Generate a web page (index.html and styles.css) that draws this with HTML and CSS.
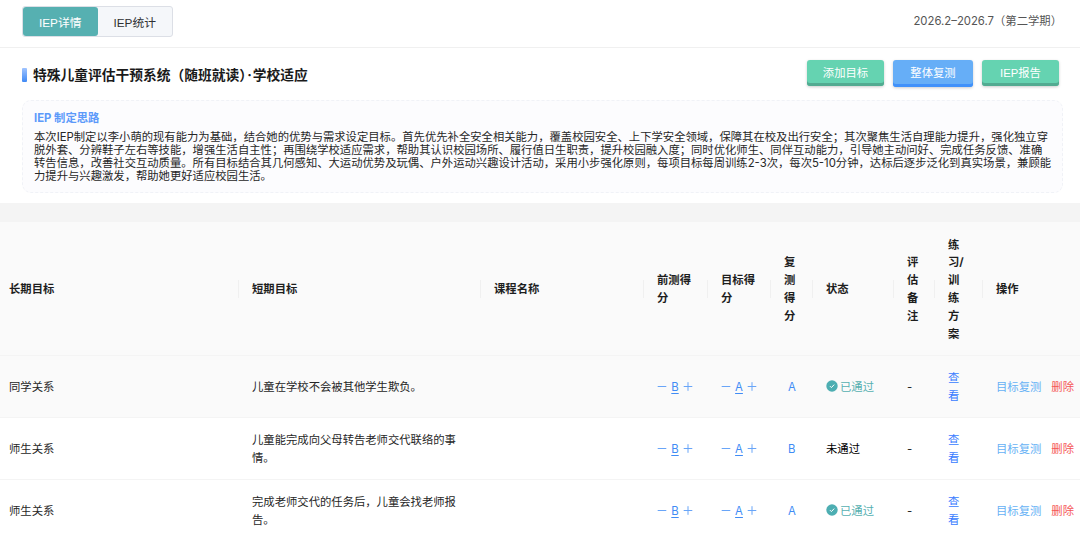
FILE: index.html
```html
<!DOCTYPE html>
<html lang="zh-CN">
<head>
    <meta charset="UTF-8">
    <meta name="viewport" content="width=device-width, initial-scale=1.0">
    <title>IEP详情</title>
    <link rel="stylesheet" href="styles.css">
</head>
<body>

<!-- Top bar -->
<header class="topbar">
    <div class="tabs">
        <button class="tab active">IEP详情</button>
        <button class="tab">IEP统计</button>
    </div>
    <div class="term">2026.2–2026.7（第二学期）</div>
</header>

<!-- Title and plan summary -->
<section class="plan">
    <div class="plan-head">
        <h2><span>特殊儿童评估干预系统（随班就读）<span class="dot">·</span>学校适应</span></h2>
        <div class="actions">
            <button class="btn green">添加目标</button>
            <button class="btn blue">整体复测</button>
            <button class="btn green">IEP报告</button>
        </div>
    </div>
    <div class="summary">
        <h3>IEP 制定思路</h3>
        <p>本次IEP制定以李小萌的现有能力为基础，结合她的优势与需求设定目标。首先优先补全安全相关能力，覆盖校园安全、上下学安全领域，保障其在校及出行安全；其次聚焦生活自理能力提升，强化独立穿脱外套、分辨鞋子左右等技能，增强生活自主性；再围绕学校适应需求，帮助其认识校园场所、履行值日生职责，提升校园融入度；同时优化师生、同伴互动能力，引导她主动问好、完成任务反馈、准确转告信息，改善社交互动质量。所有目标结合其几何感知、大运动优势及玩偶、户外运动兴趣设计活动，采用小步强化原则，每项目标每周训练2-3次，每次5-10分钟，达标后逐步泛化到真实场景，兼顾能力提升与兴趣激发，帮助她更好适应校园生活。</p>
    </div>
</section>

<!-- Goals table -->
<table class="goals">
    <colgroup>
        <col class="c-long">
        <col class="c-short">
        <col class="c-course">
        <col class="c-pre">
        <col class="c-target">
        <col class="c-retest">
        <col class="c-status">
        <col class="c-note">
        <col class="c-train">
        <col class="c-ops">
    </colgroup>
    <thead>
        <tr>
            <th>长期目标</th>
            <th>短期目标</th>
            <th>课程名称</th>
            <th>前测得分</th>
            <th>目标得分</th>
            <th>复测得分</th>
            <th>状态</th>
            <th>评估备注</th>
            <th>练习/训练方案</th>
            <th>操作</th>
        </tr>
    </thead>
    <tbody>
        <tr class="hover">
            <td>同学关系</td>
            <td>儿童在学校不会被其他学生欺负。</td>
            <td></td>
            <td><div class="score"><svg class="icon" viewBox="0 0 10 10"><path d="M.7 4.5H9.3"/></svg><u>B</u><svg class="icon" viewBox="0 0 10 10"><path d="M.7 4.5H9.3M5 .2V8.8"/></svg></div></td>
            <td><div class="score"><svg class="icon" viewBox="0 0 10 10"><path d="M.7 4.5H9.3"/></svg><u>A</u><svg class="icon" viewBox="0 0 10 10"><path d="M.7 4.5H9.3M5 .2V8.8"/></svg></div></td>
            <td class="retest">A</td>
            <td><div class="passed"><svg class="check" viewBox="0 0 12 12"><circle cx="6" cy="6" r="5.7"/><path d="M3.9 6.1L5.4 7.6L8.2 4.6"/></svg>已通过</div></td>
            <td>-</td>
            <td><a class="view">查看</a></td>
            <td><div class="ops"><a class="again">目标复测</a><a class="remove">删除</a></div></td>
        </tr>
        <tr>
            <td>师生关系</td>
            <td>儿童能完成向父母转告老师交代联络的事情。</td>
            <td></td>
            <td><div class="score"><svg class="icon" viewBox="0 0 10 10"><path d="M.7 4.5H9.3"/></svg><u>B</u><svg class="icon" viewBox="0 0 10 10"><path d="M.7 4.5H9.3M5 .2V8.8"/></svg></div></td>
            <td><div class="score"><svg class="icon" viewBox="0 0 10 10"><path d="M.7 4.5H9.3"/></svg><u>A</u><svg class="icon" viewBox="0 0 10 10"><path d="M.7 4.5H9.3M5 .2V8.8"/></svg></div></td>
            <td class="retest">B</td>
            <td class="failed">未通过</td>
            <td>-</td>
            <td><a class="view">查看</a></td>
            <td><div class="ops"><a class="again">目标复测</a><a class="remove">删除</a></div></td>
        </tr>
        <tr>
            <td>师生关系</td>
            <td>完成老师交代的任务后，儿童会找老师报告。</td>
            <td></td>
            <td><div class="score"><svg class="icon" viewBox="0 0 10 10"><path d="M.7 4.5H9.3"/></svg><u>B</u><svg class="icon" viewBox="0 0 10 10"><path d="M.7 4.5H9.3M5 .2V8.8"/></svg></div></td>
            <td><div class="score"><svg class="icon" viewBox="0 0 10 10"><path d="M.7 4.5H9.3"/></svg><u>A</u><svg class="icon" viewBox="0 0 10 10"><path d="M.7 4.5H9.3M5 .2V8.8"/></svg></div></td>
            <td class="retest">A</td>
            <td><div class="passed"><svg class="check" viewBox="0 0 12 12"><circle cx="6" cy="6" r="5.7"/><path d="M3.9 6.1L5.4 7.6L8.2 4.6"/></svg>已通过</div></td>
            <td>-</td>
            <td><a class="view">查看</a></td>
            <td><div class="ops"><a class="again">目标复测</a><a class="remove">删除</a></div></td>
        </tr>
    </tbody>
</table>

</body>
</html>
```
FILE: styles.css
```css
/* General styling */
* {
    box-sizing: border-box;
}

body {
    font-family: Inter, "Noto Sans CJK SC", sans-serif;
    font-size: 11.33px;
    line-height: 17.8px;
    color: rgb(38, 38, 38);
    background-color: white;
    margin: 0;
    height: 540px;
    overflow: hidden;
}

button {
    font-family: "Liberation Sans", "Noto Sans CJK SC", sans-serif;
    font-size: inherit;
    border: none;
    padding: 0;
    cursor: pointer;
}

/* Top bar */
.topbar {
    display: flex;
    justify-content: space-between;
    align-items: flex-start;
    height: 48px;
    padding: 6px 18px 0 22px;
    border-bottom: 1px solid rgb(240, 240, 240);
}

.tabs {
    display: flex;
    width: 151px;
    height: 31px;
    border: 1px solid rgb(220, 223, 230);
    border-radius: 3px;
    background-color: rgb(245, 247, 250);
}

.tab {
    flex: 1;
    padding-bottom: 1px;
    font-size: 11.8px;
    color: rgb(48, 49, 51);
    background: none;
}

.tab.active {
    color: white;
    background-color: rgb(86, 176, 177);
    border-radius: 3px;
}

.term {
    padding-top: 7px;
    color: rgb(85, 85, 85);
}

/* Title and plan summary */
.plan {
    height: 174px;
    padding: 12px 17px 0 22px;
    border-bottom: 19px solid rgb(244, 244, 244);
}

.plan-head {
    display: flex;
    justify-content: space-between;
    align-items: flex-start;
    height: 40px;
    padding-right: 4px;
}

h2 {
    display: flex;
    align-items: center;
    gap: 6px;
    margin: 5px 0 0;
    font-size: 13.75px;
    line-height: 20px;
    color: rgb(26, 26, 26);
}

h2::before {
    content: "";
    width: 5px;
    height: 14px;
    border-radius: 1px;
    background: linear-gradient(rgb(160, 196, 255), rgb(64, 138, 245));
}

.dot {
    margin: 0 1px;
}

.actions {
    display: flex;
    gap: 9px;
}

.btn {
    width: 77px;
    height: 26px;
    padding-bottom: 2px;
    border-radius: 3px;
    color: white;
}

.green {
    background-color: rgb(101, 211, 177);
    box-shadow: inset 0 -3px rgb(82, 171, 145), 0 1px 3px rgba(0, 0, 0, 0.2);
}

.blue {
    width: 80px;
    height: 27px;
    padding-bottom: 3px;
    background-color: rgb(102, 174, 247);
    box-shadow: inset 0 -3px rgb(64, 145, 250), 0 1px 3px rgba(0, 0, 0, 0.2);
}

.summary {
    height: 93px;
    padding: 9px 9px 0 11px;
    border: 1px dashed rgb(240, 242, 247);
    border-radius: 9px;
    background-color: rgb(252, 252, 254);
}

h3 {
    margin: 0 0 4px;
    font-size: 11.33px;
    line-height: 17px;
    color: rgb(92, 154, 250);
}

.summary p {
    margin: 0;
    line-height: 13px;
}

/* Goals table */
.goals {
    width: 1083px;
    table-layout: fixed;
    border-collapse: separate;
    border-spacing: 0;
}

.c-long { width: 239px; }
.c-short { width: 242px; }
.c-course { width: 163px; }
.c-pre { width: 64px; }
.c-target { width: 63px; }
.c-retest { width: 42px; }
.c-status { width: 81px; }
.c-note { width: 41px; }
.c-train { width: 48px; }
.c-ops { width: 100px; }

th, td {
    padding: 13px 13px 11px;
    text-align: left;
    vertical-align: middle;
    border-bottom: 1px solid rgb(244, 244, 244);
}

th:first-child, td:first-child {
    padding-left: 9px;
}

th {
    height: 134px;
    padding: 14px 13px 11px;
    color: rgb(30, 30, 30);
    word-break: break-all;
    background: linear-gradient(rgb(240, 240, 240), rgb(240, 240, 240)) right center / 1px 18px no-repeat rgb(250, 250, 250);
}

th:last-child {
    background: rgb(250, 250, 250);
}

td {
    height: 62px;
}

.hover td {
    background-color: rgb(250, 250, 250);
}

.score {
    display: flex;
    align-items: center;
    gap: 4px;
    color: rgb(64, 140, 245);
}

.score u {
    width: 8px;
    text-align: center;
    text-underline-offset: 2px;
}

.icon {
    width: 10px;
    height: 10px;
    flex: none;
    fill: none;
    stroke: rgb(105, 165, 248);
}

td.retest {
    padding-left: 17px;
    padding-right: 0;
    color: rgb(64, 140, 245);
}

.passed {
    display: flex;
    align-items: center;
    gap: 2px;
    white-space: nowrap;
    color: rgb(86, 176, 177);
}

.check {
    width: 12px;
    height: 12px;
    margin-bottom: 2px;
}

.check circle {
    fill: rgb(77, 174, 178);
}

.check path {
    fill: none;
    stroke: white;
}

.failed {
    color: black;
}

.view {
    color: rgb(56, 124, 255);
}

.ops {
    display: flex;
    gap: 10px;
    white-space: nowrap;
}

.again {
    color: rgb(102, 177, 245);
}

.remove {
    color: rgb(245, 86, 86);
}
```
